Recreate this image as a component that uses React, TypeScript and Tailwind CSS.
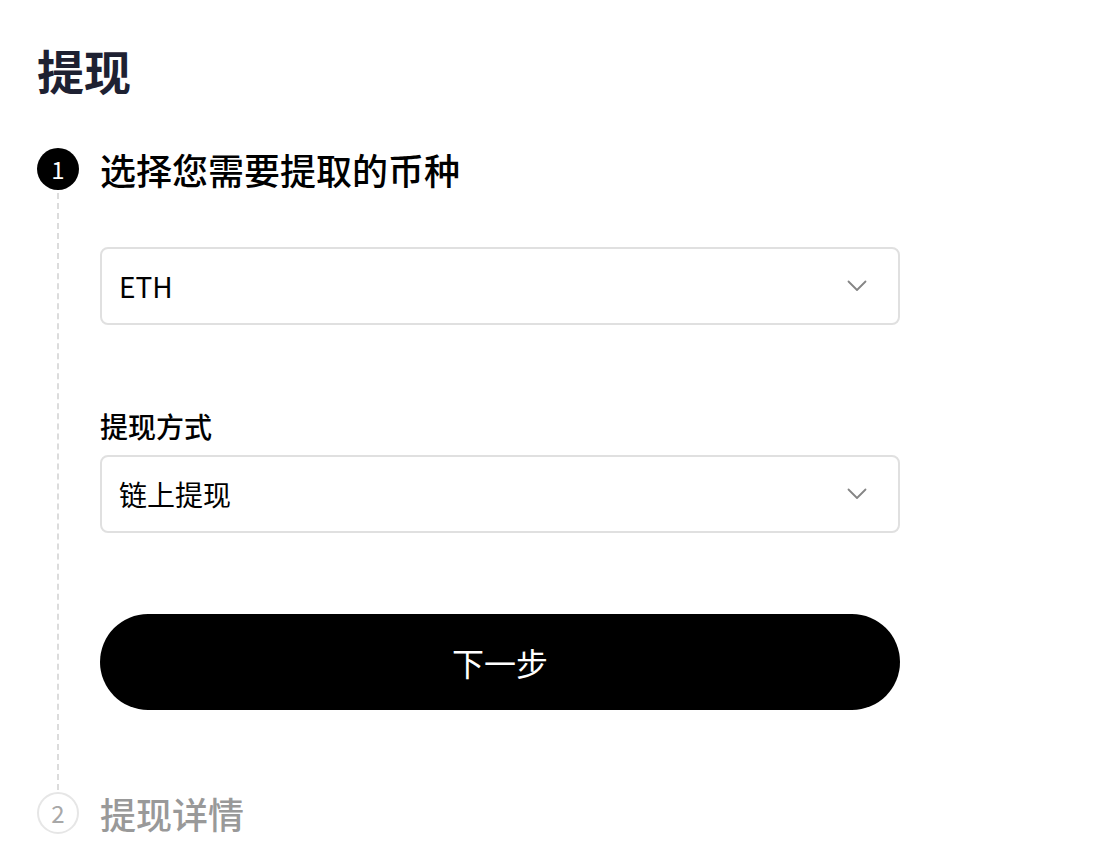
import React from 'react'

const font = { fontFamily: '"Noto Sans CJK SC", "Noto Sans", sans-serif' }

/** Chevron used on the select boxes */
function Chevron() {
  return (
    <svg width="20" height="12" viewBox="0 0 20 12" fill="none">
      <path d="M1.5 1.5 L10 10 L18.5 1.5" stroke="#858585" strokeWidth={1.8} strokeLinecap="round" strokeLinejoin="round" />
    </svg>
  )
}

function SelectBox({ value }: { value: string }) {
  return (
    <div className="flex h-[78px] w-full items-center justify-between rounded-[8px] border-2 border-[#e0e0e0] pl-[17px] pr-[31px]">
      <span className="text-[28px] leading-none text-black">{value}</span>
      <Chevron />
    </div>
  )
}

export default function App() {
  return (
    <div className="min-h-[842px] bg-white pl-[37px] pt-[42px]" style={font}>
      <h1 className="text-[47px] font-bold leading-[56px] text-[#1e2132]">提现</h1>

      {/* step 1 */}
      <div className="mt-[50px] flex">
        <div className="flex w-[42px] flex-col items-center">
          <div className="flex h-[42px] w-[42px] items-center justify-center rounded-full bg-black text-[24px] leading-none text-white">1</div>
          <div className="mt-[3px] mb-[2px] flex-1 border-l-2 border-dashed border-[#dcdcdc]" />
        </div>
        <div className="ml-[21px] w-[800px] pb-[82px]">
          <div className="text-[36px] font-medium leading-[42px] text-black">选择您需要提取的币种</div>
          <div className="mt-[57px]">
            <SelectBox value="ETH" />
          </div>
          <div className="mt-[87px] text-[28px] font-medium leading-[28px] text-black">提现方式</div>
          <div className="mt-[15px]">
            <SelectBox value="链上提现" />
          </div>
          <button className="mt-[81px] flex h-[96px] w-full items-center justify-center rounded-full bg-black text-[32px] text-white">下一步</button>
        </div>
      </div>

      {/* step 2 */}
      <div className="flex">
        <div className="flex h-[42px] w-[42px] items-center justify-center rounded-full border-2 border-[#e6e6e6] text-[24px] leading-none text-[#a8a8a8]">2</div>
        <div className="ml-[21px] text-[36px] font-medium leading-[42px] text-[#999999]">提现详情</div>
      </div>
    </div>
  )
}
